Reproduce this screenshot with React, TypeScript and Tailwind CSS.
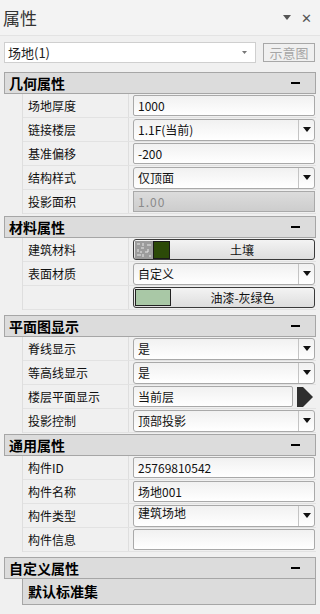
import React from 'react';

const font = { fontFamily: '"Noto Sans CJK SC", "Noto Sans", sans-serif' };

const DownArrow: React.FC = () => (
  <svg width="8" height="5" viewBox="0 0 8 5">
    <polygon points="0,0 8,0 4,5" fill="#111" />
  </svg>
);

const Label: React.FC<{ text: string }> = ({ text }) => (
  <div className="w-[106px] shrink-0 h-full flex items-center pl-[5px] border-r border-[#dedede] text-[12px] text-[#111]">
    {text}
  </div>
);

const Row: React.FC<{ label: string; children?: React.ReactNode }> = ({ label, children }) => (
  <div className="h-[24px] flex border-b border-[#e2e2e2]">
    <Label text={label} />
    <div className="flex-1 flex items-center pl-[4px] pr-[1px]">{children}</div>
  </div>
);

const TextBox: React.FC<{ value?: string; mono?: boolean }> = ({ value, mono }) => (
  <div
    className={`w-full h-[21px] flex items-center px-[4px] rounded-[2px] border border-[#a9a9a9] bg-linear-to-b from-[#f1f1f1] to-white text-[12px] text-[#111] ${mono ? 'tracking-[1px]' : ''}`}
  >
    {value}
  </div>
);

const Select: React.FC<{ value: string; top?: boolean }> = ({ value, top }) => (
  <div className="w-full h-[22px] flex rounded-[3px] border border-[#a9a9a9] bg-linear-to-b from-[#f1f1f1] to-white">
    <div className={`flex-1 flex ${top ? 'items-start -mt-[2px]' : 'items-center'} px-[4px] text-[12px] text-[#111]`}>{value}</div>
    <div className="w-[16px] flex items-center justify-center border-l border-[#c4c4c4]">
      <DownArrow />
    </div>
  </div>
);

const Header: React.FC<{ title: string; className?: string }> = ({ title, className }) => (
  <div className={`h-[22px] mx-[4px] flex items-center justify-between pl-[4px] pr-[15px] bg-[#dcdcdc] border border-[#a6a6a6] ${className ?? ''}`}>
    <span className="text-[14px] font-bold text-black">{title}</span>
    <div className="w-[9px] h-[2px] bg-black" />
  </div>
);

const Rows: React.FC<{ children: React.ReactNode }> = ({ children }) => (
  <div className="ml-[22px] mr-[4px] border-l border-[#dedede]">{children}</div>
);

const Texture: React.FC = () => (
  <svg width="18" height="18" viewBox="0 0 18 18" className="shrink-0">
    <rect width="18" height="18" fill="#9c9c9c" />
    <path d="M2 3h3M8 2v3M12 4h4M3 8v3M6 7h3M13 8v3M10 11h3M2 14h4M8 13v3M14 15h2M5 11h2" stroke="#e8e8e8" strokeWidth="1" />
  </svg>
);

const MatButton: React.FC<{ children: React.ReactNode; text: string }> = ({ children, text }) => (
  <div className="w-full h-[21px] flex items-center pl-[1px] rounded-[3px] border border-[#3a3a3a] bg-linear-to-b from-[#f3f3f3] to-[#dedede]">
    <div className="flex items-center shrink-0">{children}</div>
    <div className="flex-1 text-center text-[12px] text-[#111]">{text}</div>
  </div>
);

export default function App() {
  return (
    <div className="w-[320px] h-[614px] overflow-hidden bg-[#f0f0f0] select-none" style={font}>
      <div className="h-[36px] flex items-center justify-between pl-[3px] pr-[8px] bg-[#f3f3f3] border-b border-[#e3e3e3]">
        <span className="text-[17px] text-[#333]">属性</span>
        <div className="flex items-center gap-[10px]">
          <svg width="8" height="5" viewBox="0 0 8 5">
            <polygon points="0,0 8,0 4,5" fill="#555" />
          </svg>
          <span className="text-[13px] text-[#555] leading-none">✕</span>
        </div>
      </div>

      <div className="mt-[6px] h-[21px] flex items-center px-[4px] gap-[7px]">
        <div className="w-[252px] h-[21px] flex items-center justify-between bg-white border border-[#cfcfcf] pl-[3px] pr-[8px]">
          <span className="text-[13px] text-[#222]">场地(1)</span>
          <svg width="5" height="3" viewBox="0 0 5 3">
            <polygon points="0,0 5,0 2.5,3" fill="#777" />
          </svg>
        </div>
        <div className="w-[52px] h-[19px] flex items-center justify-center border border-[#a8a8a8] text-[13px] text-[#a6a6a6]">
          示意图
        </div>
      </div>

      <Header title="几何属性" className="mt-[9px]" />
      <Rows>
        <Row label="场地厚度"><TextBox value="1000" /></Row>
        <Row label="链接楼层"><Select value="1.1F(当前)" /></Row>
        <Row label="基准偏移"><TextBox value="-200" /></Row>
        <Row label="结构样式"><Select value="仅顶面" /></Row>
        <Row label="投影面积">
          <div className="w-full h-[21px] flex items-center px-[4px] border border-[#a9a9a9] bg-linear-to-b from-[#dcdcdc] to-[#cdcdcd] text-[12px] text-[#8a8a8a] tracking-[1px]">
            1.00
          </div>
        </Row>
      </Rows>

      <Header title="材料属性" className="mt-[2px]" />
      <Rows>
        <Row label="建筑材料">
          <MatButton text="土壤">
            <Texture />
            <div className="w-[17px] h-[18px] bg-[#2c4a08] border border-[#1a1a1a]" />
          </MatButton>
        </Row>
        <Row label="表面材质"><Select value="自定义" /></Row>
        <div className="h-[24px] flex border-b border-[#e2e2e2]">
          <div className="w-[106px] shrink-0 h-full border-r border-[#dedede]" />
          <div className="flex-1 flex items-center pl-[4px] pr-[1px]">
            <MatButton text="油漆-灰绿色">
              <div className="w-[36px] h-[17px] bg-[#a9c8a6] border border-[#222]" />
            </MatButton>
          </div>
        </div>
      </Rows>

      <Header title="平面图显示" className="mt-[5px]" />
      <Rows>
        <Row label="脊线显示"><Select value="是" /></Row>
        <Row label="等高线显示"><Select value="是" /></Row>
        <Row label="楼层平面显示">
          <div className="flex-1 flex items-center gap-[4px]">
            <TextBox value="当前层" />
            <svg width="16" height="20" viewBox="0 0 16 20" className="shrink-0 mr-[2px]">
              <path d="M0 0h6l10 10-10 10H0z" fill="#2e2e2e" />
            </svg>
          </div>
        </Row>
        <Row label="投影控制"><Select value="顶部投影" /></Row>
      </Rows>

      <Header title="通用属性" className="mt-[1px]" />
      <Rows>
        <Row label="构件ID"><TextBox value="25769810542" /></Row>
        <Row label="构件名称"><TextBox value="场地001" /></Row>
        <Row label="构件类型"><Select value="建筑场地" top /></Row>
        <Row label="构件信息"><TextBox /></Row>
      </Rows>

      <Header title="自定义属性" className="mt-[5px]" />
      <div className="ml-[22px] mr-[4px] h-[26px] flex items-center pl-[5px] bg-[#dcdcdc] border border-t-0 border-[#a6a6a6] text-[14px] font-bold text-black">
        默认标准集
      </div>
    </div>
  );
}
